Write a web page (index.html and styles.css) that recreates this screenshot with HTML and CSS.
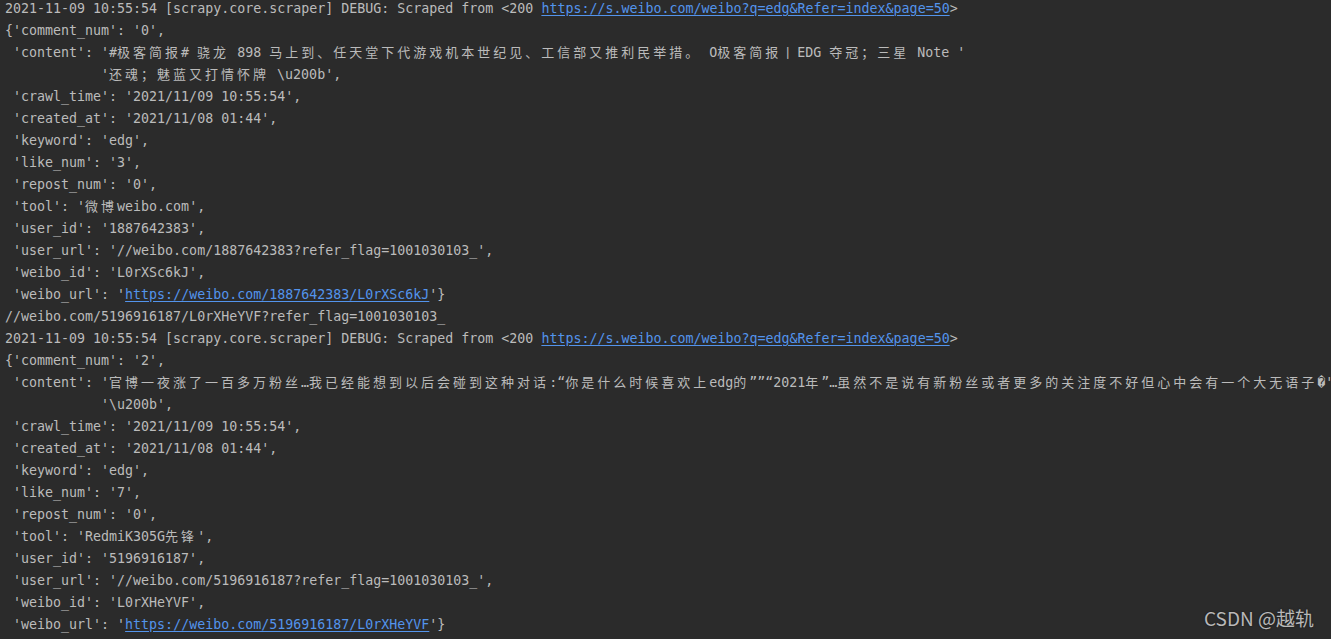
FILE: index.html
```html
<!DOCTYPE html>
<html lang="en">

<head>
    <meta charset="UTF-8">
    <meta name="viewport" content="width=device-width, initial-scale=1.0">
    <title>scrapy console</title>
    <link rel="stylesheet" href="styles.css">
</head>

<body>
    <div class="console">
<pre class="log">2021-11-09 10:55:54 [scrapy.core.scraper] DEBUG: Scraped from &lt;200 <a class="link">https://s.weibo.com/weibo?q=edg&amp;Refer=index&amp;page=50</a>&gt;
{'comment_num': '0',
 'content': '#<span class="zh">极客简报</span># <span class="zh">骁龙</span> 898 <span class="zh">马上到、任天堂下代游戏机本世纪见、工信部又推利民举措。</span> O<span class="zh">极客简报丨</span>EDG <span class="zh">夺冠；三星</span> Note '
            '<span class="zh">还魂；魅蓝又打情怀牌</span> \u200b',
 'crawl_time': '2021/11/09 10:55:54',
 'created_at': '2021/11/08 01:44',
 'keyword': 'edg',
 'like_num': '3',
 'repost_num': '0',
 'tool': '<span class="zh">微博</span>weibo.com',
 'user_id': '1887642383',
 'user_url': '//weibo.com/1887642383?refer_flag=1001030103_',
 'weibo_id': 'L0rXSc6kJ',
 'weibo_url': '<a class="link">https://weibo.com/1887642383/L0rXSc6kJ</a>'}
//weibo.com/5196916187/L0rXHeYVF?refer_flag=1001030103_
2021-11-09 10:55:54 [scrapy.core.scraper] DEBUG: Scraped from &lt;200 <a class="link">https://s.weibo.com/weibo?q=edg&amp;Refer=index&amp;page=50</a>&gt;
{'comment_num': '2',
 'content': '<span class="zh">官博一夜涨了一百多万粉丝</span>…<span class="zh">我已经能想到以后会碰到这种对话</span>:“<span class="zh">你是什么时候喜欢上</span>edg<span class="zh">的</span>””“2021<span class="zh">年</span>”…<span class="zh">虽然不是说有新粉丝或者更多的关注度不好但心中会有一个大无语子</span>�'
            '\u200b',
 'crawl_time': '2021/11/09 10:55:54',
 'created_at': '2021/11/08 01:44',
 'keyword': 'edg',
 'like_num': '7',
 'repost_num': '0',
 'tool': 'RedmiK305G<span class="zh">先锋</span>',
 'user_id': '5196916187',
 'user_url': '//weibo.com/5196916187?refer_flag=1001030103_',
 'weibo_id': 'L0rXHeYVF',
 'weibo_url': '<a class="link">https://weibo.com/5196916187/L0rXHeYVF</a>'}</pre>
        <div class="watermark">CSDN @越轨</div>
    </div>
</body>

</html>
```

FILE: styles.css
```css
html,
body {
    margin: 0;
    height: 100%;
    background-color: #2b2b2b;
    overflow: hidden;
}

.console {
    position: relative;
    height: 100%;
}

.log {
    margin: -2px 0 0 0;
    padding: 0 0 0 5px;
    font-family: "DejaVu Sans Mono", "Liberation Mono", "Noto Sans CJK SC", monospace;
    font-size: 13.3px;
    line-height: 22px;
    color: #bbbbbb;
    white-space: pre;
    overflow: hidden;
}

.log .zh {
    font-family: "Noto Sans CJK SC", sans-serif;
    font-size: 13px;
    line-height: 1;
    letter-spacing: 3px;
}

.log .link {
    color: #5394ec;
    text-decoration: underline;
    text-underline-offset: 2px;
}

.watermark {
    position: absolute;
    right: 17px;
    bottom: 6px;
    font-family: "Noto Sans CJK SC", "Noto Sans", sans-serif;
    font-size: 19px;
    color: rgba(230, 230, 230, 0.78);
    text-shadow: 0 0 2px rgba(0, 0, 0, 0.6);
}
```
